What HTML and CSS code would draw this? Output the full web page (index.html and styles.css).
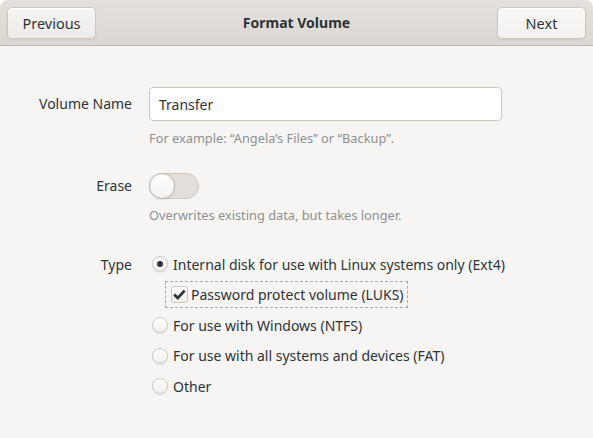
FILE: index.html
```html
<!DOCTYPE html>
<html>
<head>
<meta charset="utf-8">
<link rel="stylesheet" href="styles.css">
</head>
<body>
<div class="window">
  <header class="headerbar">
    <button class="btn">Previous</button>
    <div class="title">Format Volume</div>
    <button class="btn btn-next">Next</button>
  </header>
  <main class="form">
    <label class="label label-name">Volume Name</label>
    <div class="entry">Transfer</div>
    <div class="hint hint-name">For example: “Angela’s Files” or “Backup”.</div>

    <label class="label label-erase">Erase</label>
    <div class="switch"><span class="knob"></span></div>
    <div class="hint hint-erase">Overwrites existing data, but takes longer.</div>

    <label class="label label-type">Type</label>
    <div class="options">
      <div class="option"><span class="radio checked"></span><span>Internal disk for use with Linux systems only (Ext4)</span></div>
      <div class="option sub"><div class="focus"><span class="check"><svg width="15" height="15" viewBox="0 0 15 15"><path d="M2.2 7.6 L5.8 11 L12.6 3.6" fill="none" stroke="#2e3436" stroke-width="2.8" stroke-linecap="butt" stroke-linejoin="miter"/></svg></span><span>Password protect volume (LUKS)</span></div></div>
      <div class="option"><span class="radio"></span><span>For use with Windows (NTFS)</span></div>
      <div class="option"><span class="radio"></span><span>For use with all systems and devices (FAT)</span></div>
      <div class="option"><span class="radio"></span><span>Other</span></div>
    </div>
  </main>
</div>
</body>
</html>
```
FILE: styles.css
```css
html, body {
  margin: 0;
  padding: 0;
  background: #ffffff;
}
body {
  font-family: "Noto Sans", "DejaVu Sans", sans-serif;
  font-size: 14px;
  color: #2e3436;
  width: 593px;
  height: 438px;
  overflow: hidden;
}
.window {
  background: #f6f5f4;
  height: 438px;
  border-radius: 8px 8px 0 0;
  overflow: hidden;
}
.headerbar {
  height: 45px;
  border-bottom: 1px solid #bfb8b1;
  background: linear-gradient(#e3e0dd, #dcd8d4);
  display: flex;
  align-items: center;
  justify-content: space-between;
  padding: 0 7px;
  box-sizing: content-box;
}
.btn {
  font: inherit;
  font-size: 14.5px;
  color: #2e3436;
  width: 89px;
  height: 32px;
  margin-top: 1px;
  border: 1px solid #cdc7c2;
  border-radius: 5px;
  background: linear-gradient(#f6f5f4, #edebe9);
  box-shadow: inset 0 1px #ffffff, 0 1px 2px rgba(0,0,0,0.07);
  padding: 0;
}
.btn-next {
  background: linear-gradient(#f9f8f7, #f3f2f0);
}
.title {
  font-weight: bold;
  color: #2e3436;
}
.form {
  display: grid;
  grid-template-columns: 132px 353px;
  column-gap: 17px;
  padding-top: 41px;
}
.label {
  grid-column: 1;
  justify-self: end;
  align-self: center;
  margin-top: -2px;
}
.label-type {
  align-self: start;
  margin-top: 6px;
}
.entry {
  grid-column: 2;
  height: 32px;
  border: 1px solid #cdc7c2;
  border-radius: 4px;
  background: #ffffff;
  box-sizing: content-box;
  display: flex;
  align-items: center;
  padding-left: 9px;
}
.hint {
  grid-column: 2;
  font-size: 12.8px;
  line-height: 18px;
  color: #8e9192;
  white-space: nowrap;
}
.hint-name {
  margin-top: 8px;
  margin-bottom: 26px;
}
.hint-erase {
  margin-top: 7px;
  margin-bottom: 25px;
}
.switch {
  grid-column: 2;
  width: 48px;
  height: 24px;
  border: 1px solid #cdc7c2;
  border-radius: 14px;
  background: #e1dedb;
  position: relative;
}
.knob {
  position: absolute;
  left: -1px;
  top: -1px;
  width: 24px;
  height: 24px;
  border: 1px solid #bfb8b1;
  border-radius: 50%;
  background: linear-gradient(#ffffff, #f4f2f1);
  box-shadow: 0 1px 2px rgba(0,0,0,0.1);
}
.options {
  grid-column: 2;
  display: flex;
  flex-direction: column;
  white-space: nowrap;
}
.option {
  height: 30.5px;
  display: flex;
  align-items: center;
  gap: 5px;
  margin-left: 3px;
}
.radio {
  width: 14px;
  height: 14px;
  border: 1px solid #cdc7c2;
  border-radius: 50%;
  background: linear-gradient(#ffffff, #f1efed);
  box-shadow: 0 1px 1px rgba(0,0,0,0.08);
  position: relative;
  flex: none;
}
.radio.checked::after {
  content: "";
  position: absolute;
  left: 4px;
  top: 4px;
  width: 6px;
  height: 6px;
  border-radius: 50%;
  background: #2e3436;
}
.sub {
  margin-left: 16px;
}
.focus {
  display: flex;
  align-items: center;
  gap: 3px;
  border: 1px dashed #a9aaa8;
  padding: 2px 3px 2px 5px;
  height: 21px;
}
.check {
  width: 15px;
  height: 15px;
  border: 1px solid #cdc7c2;
  border-radius: 3px;
  background: linear-gradient(#ffffff, #f1efed);
  display: flex;
  align-items: center;
  justify-content: center;
  flex: none;
}
```
